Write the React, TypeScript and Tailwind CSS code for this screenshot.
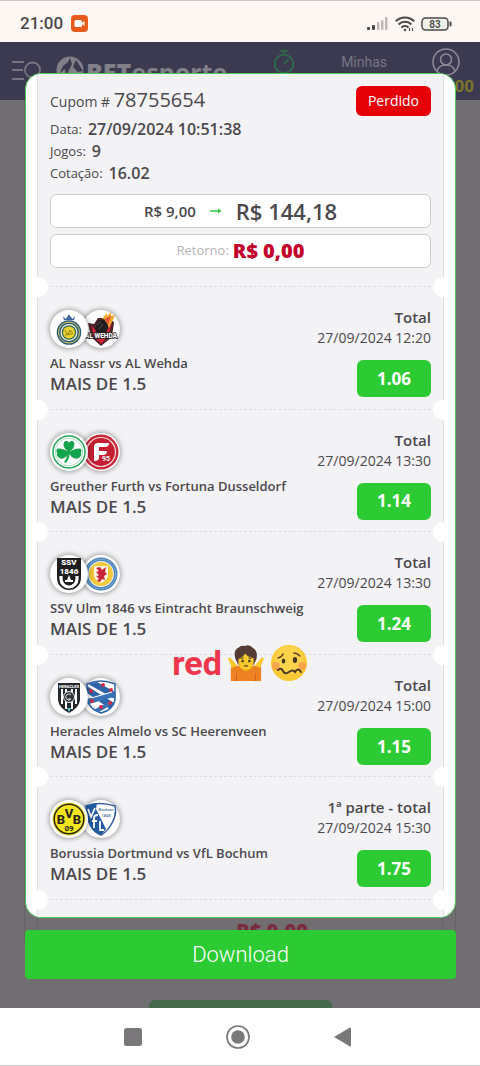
import React from 'react';

type Match = {
	teams: string;
	pick: string;
	market: string;
	date: string;
	odd: string;
	home: React.ReactNode;
	away: React.ReactNode;
};

const AlNassr = () => (
	<svg viewBox="0 0 36 36" className="size-full">
		<path d="M12 5l2.500 3L18 3.500l3.500 4.500L24 5l-1.500 7h-9z" fill="#3f659f" />
		<path d="M13 9.500h10" stroke="#fff" strokeWidth=".8" />
		<circle cx="18" cy="21.500" r="12.300" fill="#2f6079" />
		<circle cx="18" cy="21.500" r="10.500" fill="none" stroke="#d9c75a" strokeWidth="1" />
		<circle cx="18" cy="21.500" r="8.500" fill="#f4f4ea" />
		<circle cx="18" cy="21.500" r="7.300" fill="#386b50" />
		<circle cx="18" cy="21.500" r="6" fill="#e8d32f" />
		<path d="M14 19l3 5 2-5 3 4M14 24l7-1" stroke="#98811d" strokeWidth="1" fill="none" />
	</svg>
);

const AlWehda = () => (
	<svg viewBox="0 0 36 36" className="size-full">
		<path d="M5 12l6 1 4-6h9l7 4-2 15-11 9L8 26z" fill="#4a2329" />
		<path d="M8 14l3 11 7 8 7-7 4-14-4 6-6 8z" fill="#d32036" />
		<path d="M19 8l5-6v3l4-4v4l4-1-3 7-3 6-3-5z" fill="#f2a52d" />
		<path d="M22 8l6-3-3 9z" fill="#e7503b" />
		<path d="M12 18l3-8 6-2 4 6-2 9-8 2z" fill="#201d20" />
		<path d="M14 14l4-3M16 18l4-5" stroke="#5c5558" strokeWidth="1" />
		<text x="18" y="27" textAnchor="middle" fontSize="6.500" fontWeight="800" fill="#fff" stroke="#222" strokeWidth="1.500" paintOrder="stroke" fontFamily="Roboto, sans-serif">AL WEHDA</text>
	</svg>
);

const Furth = () => (
	<svg viewBox="0 0 36 36" className="size-full">
		<circle cx="18" cy="18" r="16" fill="#fff" stroke="#24a65a" strokeWidth="1.500" />
		<circle cx="18" cy="18" r="13.800" fill="#fff" stroke="#73c795" strokeWidth=".6" />
		<g fill="#14a34d">
			<path d="M18 18C10 13 12 6 16 7q2 .5 2 2 0-1.500 2-2c4-1 6 6-2 11z" />
			<path d="M18 18C7 12 4 15 6 19q-1 2 1 4c4 4 10 0 11-5z" />
			<path d="M18 18c11-6 14-3 12 1q1 2-1 4c-4 4-10 0-11-5z" />
			<path d="M17 17h2q0 7-4 12l-2-1q4-5 4-11z" />
		</g>
	</svg>
);

const Fortuna = () => (
	<svg viewBox="0 0 36 36" className="size-full">
		<circle cx="18" cy="18" r="17.500" fill="#c9283a" />
		<circle cx="18" cy="18" r="14.500" fill="#c51f32" stroke="#f3dadd" strokeWidth="1.200" />
		<path d="M11 27V13q0-4 4-4h11q0 4-4 4h-6v4h8q0 4-4 4h-4v3q0 3-5 3z" fill="#fff" />
		<text x="23" y="27" textAnchor="middle" fontSize="7" fontWeight="700" fill="#fff" fontFamily="Roboto, sans-serif">95</text>
	</svg>
);

const Ulm = () => (
	<svg viewBox="0 0 36 36" className="size-full">
		<path d="M6 2h24v20a12 12 0 0 1-24 0z" fill="#1f1f20" />
		<g fill="#fff" fontFamily="Roboto, sans-serif" fontWeight="900" textAnchor="middle">
			<text x="18" y="9" fontSize="8">SSV</text>
			<text x="18" y="18" fontSize="8">1846</text>
		</g>
		<path d="M10 20v3a8 8 0 0 0 16 0v-3" fill="none" stroke="#fff" strokeWidth="3.200" />
		<path d="M14 26v-2h2l2-5 2 5h2v2z" fill="#fff" />
	</svg>
);

const Braunschweig = () => (
	<svg viewBox="0 0 36 36" className="size-full">
		<circle cx="18" cy="18" r="17" fill="#f4f4f4" />
		<circle cx="18" cy="18" r="14.700" fill="none" stroke="#4d87bd" strokeWidth="3.500" />
		<circle cx="18" cy="18" r="14.700" fill="none" stroke="#9dbfdc" strokeWidth="1" strokeDasharray="1.500 1" />
		<circle cx="18" cy="18" r="12" fill="#f1c83a" />
		<path d="M11 10h14v9q-1 6-7 8-6-2-7-8z" fill="#fff2df" />
		<path d="M13 12l4-1 2 3 4-3-1 5 2 2-3 2 1 4-3-1-2 3-3-1 2-3-3-1 3-2-3-3 3-1z" fill="#c9263a" />
	</svg>
);

const Heracles = () => (
	<svg viewBox="0 0 36 36" className="size-full">
		<path d="M7 4h22v17q-1 8-11 13Q8 29 7 21z" fill="#26292c" />
		<path d="M11 10v15M15 10v20M21 10v20M25 10v15" stroke="#fff" strokeWidth="2" />
		<circle cx="18" cy="18" r="5.500" fill="#303438" stroke="#e9e9e9" />
		<path d="M20 16a3 3 0 1 0 0 4h-3" fill="none" stroke="#ddd" />
		<path d="M16 29h4l-2 4z" fill="#60cfc8" />
		<text x="18" y="9" textAnchor="middle" fontSize="4" fontWeight="800" fill="#fff" fontFamily="Roboto, sans-serif">HERACLES</text>
	</svg>
);

const Heerenveen = () => (
	<svg viewBox="0 0 36 36" className="size-full">
		<path d="M4 5q14-6 28 0v16q-2 10-14 13Q6 30 4 20z" fill="#fff" stroke="#2d63a8" strokeWidth="1.500" />
		<path d="M4 7l27 17-4 6L4 14zM14 3l18 10v7L5 5z" fill="#2d63a8" />
		<path d="M4 20l27-8v6L6 25zM10 31l18-9-3 6-9 5z" fill="#3972b4" />
		<g fill="#d12b49">
			<circle cx="20" cy="6" r="2" /><circle cx="8" cy="12" r="2" />
			<circle cx="28" cy="11" r="2" /><circle cx="9" cy="22" r="2" />
			<circle cx="27" cy="24" r="2" /><circle cx="18" cy="28" r="2" />
		</g>
		<path d="M8 19l21-6" stroke="#fff" strokeWidth="1" />
	</svg>
);

const Dortmund = () => (
	<svg viewBox="0 0 36 36" className="size-full">
		<circle cx="18" cy="18" r="16.500" fill="#ece12c" />
		<circle cx="18" cy="18" r="14.800" fill="#f5e51d" stroke="#292719" strokeWidth="1.500" />
		<g fill="#29261b" fontFamily="Roboto, sans-serif" fontWeight="800" textAnchor="middle">
			<text x="10" y="23" fontSize="13">B</text>
			<text x="18" y="17" fontSize="13">V</text>
			<text x="26" y="23" fontSize="13">B</text>
			<text x="18" y="30" fontSize="8">09</text>
		</g>
	</svg>
);

const Bochum = () => (
	<svg viewBox="0 0 36 36" className="size-full">
		<path d="M3 5q14-5 29 0 2 8-3 17-4 8-11 12Q4 29 3 5z" fill="#fff" stroke="#315f9f" strokeWidth="1.500" />
		<path d="M3 5q6-3 11-3l-1 6 10 20-5 6Q4 29 3 5z" fill="#245aa0" />
		<path d="M5 8l3 8 4-9M11 27V17q0-3 4-3M9 20h5M17 20v9h4" fill="none" stroke="#fff" strokeWidth="1.800" />
		<g fill="#5d7fae" fontSize="4" fontWeight="700" textAnchor="middle" fontFamily="Roboto, sans-serif">
			<text x="23" y="10">Bochum</text>
			<text x="23" y="16">1848</text>
		</g>
	</svg>
);

const matches: Match[] = [
	{ teams: 'AL Nassr vs AL Wehda', pick: 'MAIS DE 1.5', market: 'Total', date: '27/09/2024 12:20', odd: '1.06', home: <AlNassr />, away: <AlWehda /> },
	{ teams: 'Greuther Furth vs Fortuna Dusseldorf', pick: 'MAIS DE 1.5', market: 'Total', date: '27/09/2024 13:30', odd: '1.14', home: <Furth />, away: <Fortuna /> },
	{ teams: 'SSV Ulm 1846 vs Eintracht Braunschweig', pick: 'MAIS DE 1.5', market: 'Total', date: '27/09/2024 13:30', odd: '1.24', home: <Ulm />, away: <Braunschweig /> },
	{ teams: 'Heracles Almelo vs SC Heerenveen', pick: 'MAIS DE 1.5', market: 'Total', date: '27/09/2024 15:00', odd: '1.15', home: <Heracles />, away: <Heerenveen /> },
	{ teams: 'Borussia Dortmund vs VfL Bochum', pick: 'MAIS DE 1.5', market: '1ª parte - total', date: '27/09/2024 15:30', odd: '1.75', home: <Dortmund />, away: <Bochum /> },
];

const StatusBar = () => (
	<div className="flex h-[42px] items-center justify-between border-t border-[#cfc8c8] bg-[#fdf7f4] pt-1 pr-7 pl-5">
		<div className="flex items-center gap-2 font-['Roboto',sans-serif] text-[17px] font-medium text-[#4b4748]">
			<span>21:00</span>
			<svg viewBox="0 0 17 17" className="size-[17px]">
				<rect width="17" height="17" rx="4" fill="#e75c1d" />
				<rect x="3.500" y="5" width="7.500" height="7" rx="1.500" fill="#fff" />
				<path d="M11 8l2.500-2v5L11 9z" fill="#fff" />
			</svg>
		</div>
		<div className="flex items-center gap-1.5">
			<svg viewBox="0 0 22 14" className="h-3.5 w-[22px]">
				<g fill="#4b4849">
					<rect x="0" y="10" width="3" height="3" rx="1" />
					<rect x="5" y="8" width="3" height="5" rx="1" />
				</g>
				<g fill="#bdb8b7">
					<rect x="10" y="5" width="2.500" height="8" rx="1" />
					<rect x="14" y="3" width="2.500" height="10" rx="1" />
					<rect x="18" y="0" width="2.500" height="13" rx="1" />
				</g>
			</svg>
			<svg viewBox="0 0 20 16" className="h-4 w-5" fill="none" stroke="#4b4849" strokeWidth="2">
				<path d="M.8 5.200a13 13 0 0 1 18.400 0M3.600 8.500a9 9 0 0 1 12.800 0M6.400 11.500a5 5 0 0 1 7.200 0" />
				<circle cx="10" cy="14" r="1.200" fill="#4b4849" stroke="none" />
				<path d="M14.500 12v3M17.500 15v-3" strokeWidth="1.200" />
			</svg>
			<svg viewBox="0 0 31 14" className="h-3.5 w-[31px]">
				<rect x="1" y="1" width="26" height="12" rx="3.500" fill="#edf0e8" stroke="#4b4849" strokeWidth="1.500" />
				<rect x="28.500" y="4.500" width="2" height="5" rx="1" fill="#4b4849" />
				<text x="14" y="10.500" textAnchor="middle" fontSize="10" fontWeight="600" fill="#4b4849" fontFamily="Roboto, sans-serif">83</text>
			</svg>
		</div>
	</div>
);

const SiteHeader = () => (
	<header className="flex h-[58px] justify-between bg-[#3c3a50] pr-[6px] pl-3">
		<div className="flex pt-3.5">
			<svg viewBox="0 0 30 30" className="mt-1 mr-3.5 size-[30px]" fill="none" stroke="#77757f" strokeWidth="1.800">
				<path d="M0 2h12M0 10h11M0 19h12M26 16l4 5" />
				<circle cx="20.500" cy="10" r="7.500" />
			</svg>
			<svg viewBox="0 0 28 28" className="size-7">
				<circle cx="14" cy="14" r="13.500" fill="#817f88" />
				<path d="M14 2l-2 4-5 4-3 7 5-4 1 9 3-8 3-6zM20 4l-3 7 5 5 5-1z" fill="#3c3a50" />
			</svg>
			<div className="ml-0.5 font-['Noto_Sans',sans-serif] text-[25px] leading-8 font-black text-[#817f88]">
				BET<span className="font-bold">esporte</span>
			</div>
		</div>
		<svg viewBox="0 0 24 26" className="mt-2 size-6" fill="none" stroke="#2f6a4a" strokeWidth="2">
			<circle cx="12" cy="15" r="10" />
			<path d="M12 15l5-5M8 1h8M12 1v4" />
		</svg>
		<a href="#minhas" className="pt-2.5 font-['Roboto',sans-serif] text-[14px] leading-5 text-[#777584]">Minhas</a>
		<div className="flex flex-col items-end pt-1.5">
			<svg viewBox="0 0 28 28" className="mr-3.5 size-7" fill="none" stroke="#8d8b97" strokeWidth="1.500">
				<circle cx="14" cy="14" r="13" />
				<circle cx="14" cy="11.500" r="5.500" />
				<path d="M5 23q2-6 9-6t9 6" />
			</svg>
			<span className="font-['Roboto',sans-serif] text-[17px] leading-5 font-bold text-[#7c7528]">00</span>
		</div>
	</header>
);

const MatchRow = ({ match }: { match: Match }) => (
	<li className="relative flex items-start justify-between px-3 pt-[19px]">
		<div>
			<div className="mt-1 flex">
				<span className="z-10 size-[38px] rounded-full bg-white p-px shadow-[0_0_5px_1px_rgba(0,0,0,0.35)]">{match.home}</span>
				<span className="-ml-1.5 size-[38px] rounded-full bg-white p-px shadow-[0_0_5px_1px_rgba(0,0,0,0.35)]">{match.away}</span>
			</div>
			<p className="mt-[5px] text-[13px] leading-5 font-semibold">{match.teams}</p>
			<p className="text-[17px] leading-[22px] font-semibold">{match.pick}</p>
		</div>
		<div className="flex flex-col items-end">
			<p className="text-[15px] leading-[22px] font-semibold">{match.market}</p>
			<p className="text-[14px] leading-5">{match.date}</p>
			<button className="mt-3 h-[37px] w-[74px] rounded-md bg-[#2dcb33] text-[17px] font-bold text-white">{match.odd}</button>
		</div>
		<Divider />
	</li>
);

const Divider = () => (
	<>
		<span className="absolute inset-x-3 bottom-0 border-b border-dashed border-[#dddbdf]" />
		<span className="absolute -bottom-2.5 -left-2.5 size-5 rounded-full bg-white" />
		<span className="absolute -right-2.5 -bottom-2.5 size-5 rounded-full bg-white" />
	</>
);

const Coupon = () => (
	<section className="rounded-2xl border border-[#4fc75c] bg-white px-[11px]">
		<div className="relative border-x border-[#e0dfe3] bg-[#f3f2f5] pb-[17px] text-[#4b494d]">
			<div className="relative px-3 pt-3 pb-[19px]">
				<div className="flex items-start justify-between">
					<h1 className="text-[14px] leading-7">Cupom # <span className="text-[20px]">78755654</span></h1>
					<span className="rounded-md bg-[#e60008] px-3 text-[14px] leading-[30px] text-white">Perdido</span>
				</div>
				<dl className="mt-0.5 text-[13px] leading-[22px]">
					<div className="flex gap-1.5"><dt>Data:</dt><dd className="text-[16px] font-semibold">27/09/2024 10:51:38</dd></div>
					<div className="flex gap-1.5"><dt>Jogos:</dt><dd className="text-[16px] font-semibold">9</dd></div>
					<div className="flex gap-1.5"><dt>Cotação:</dt><dd className="text-[16px] font-semibold">16.02</dd></div>
				</dl>
				<div className="mt-2.5 flex h-[34px] items-center justify-center rounded-md border border-[#cdccd0] bg-white">
					<span className="text-[15px] font-semibold">R$ 9,00</span>
					<svg viewBox="0 0 12 8" className="mx-3.5 h-2 w-3" fill="none" stroke="#35c447" strokeWidth="1.500">
						<path d="M0 4h9" />
						<path d="M8 1.500L11.500 4 8 6.500z" fill="#35c447" stroke="none" />
					</svg>
					<span className="text-[22px] font-semibold">R$ 144,18</span>
				</div>
				<div className="mt-1.5 flex h-[34px] items-center justify-center gap-1 rounded-md border border-[#cdccd0] bg-white">
					<span className="text-[13px] text-[#b5b4b7]">Retorno:</span>
					<span className="text-[20px] font-extrabold text-[#c3002b]">R$ 0,00</span>
				</div>
				<Divider />
			</div>
			<ul className="grid min-h-[613px] auto-rows-fr">
				{matches.map((match) => (
					<MatchRow key={match.teams} match={match} />
				))}
			</ul>
		</div>
	</section>
);

const Reaction = () => (
	<div className="absolute inset-x-0 top-[601px] flex items-center justify-center gap-1.5">
		<span className="font-['Roboto',sans-serif] text-[34px] leading-10 font-bold text-[#ee364d]">red</span>
		<svg viewBox="0 0 38 38" className="h-[38px] w-9">
			<path d="M3 38V25q0-3 4-3h24q4 0 4 3v13z" fill="#ee8223" />
			<path d="M9 38v-8M29 38v-8" stroke="#c9611b" strokeWidth="1" />
			<path d="M4 24L0 14l2-1 8 9zM34 24l4-10-2-1-8 9z" fill="#fbc52c" />
			<path d="M13 22h12q-1 6-6 6t-6-6z" fill="#e4a41f" />
			<path d="M8 15Q5 6 11 3q2-3 7-2 5-2 8 2 6 3 4 12l-3 6H11z" fill="#543c35" />
			<path d="M11 15q5-2 7-6 3 4 9 5 1 12-8 12t-8-11z" fill="#fbc92e" />
			<circle cx="15.500" cy="17" r="1.400" fill="#473a32" />
			<circle cx="22.500" cy="17" r="1.400" fill="#473a32" />
			<path d="M13.500 14.500l3-1M21.500 13.500l3 1M17 22.500q2-1.500 4 0" fill="none" stroke="#5d4427" strokeWidth="1.200" />
		</svg>
		<svg viewBox="0 0 38 38" className="size-[38px]">
			<circle cx="19" cy="19" r="18" fill="#fbc936" />
			<circle cx="19" cy="16" r="14" fill="#fdd755" opacity=".7" />
			<circle cx="6" cy="22" r="4" fill="#f28b52" opacity=".6" />
			<circle cx="32" cy="22" r="4" fill="#f28b52" opacity=".6" />
			<ellipse cx="13.500" cy="17" rx="1.800" ry="2.500" fill="#463629" />
			<ellipse cx="25" cy="16" rx="2.200" ry="3" fill="#463629" />
			<path d="M8 14q4-1 5-4M30 12q-3-3-6-3" fill="none" stroke="#604322" strokeWidth="1.500" strokeLinecap="round" />
			<path d="M8 26q3-3 5 1t6 1 6 0q3-5 6 0" fill="none" stroke="#4c3928" strokeWidth="2" strokeLinecap="round" />
		</svg>
	</div>
);

const NavBar = () => (
	<nav className="flex h-[58px] items-center justify-center gap-[84px] border-b border-[#cfcfcf] bg-white pr-1">
		<button aria-label="Recentes">
			<svg viewBox="0 0 18 18" className="size-[18px]"><rect width="18" height="18" rx="2.500" fill="#7b787c" /></svg>
		</button>
		<button aria-label="Início">
			<svg viewBox="0 0 24 24" className="size-6">
				<circle cx="12" cy="12" r="11" fill="none" stroke="#7b787c" strokeWidth="1.700" />
				<circle cx="12" cy="12" r="6.800" fill="#7b787c" />
			</svg>
		</button>
		<button aria-label="Voltar">
			<svg viewBox="0 0 18 20" className="h-5 w-[18px]"><path d="M0 10L16 .5q1 0 1 1v17q0 1-1 1z" fill="#7b787c" /></svg>
		</button>
	</nav>
);

const App: React.FC = () => {
	return (
		<div className="flex min-h-screen flex-col bg-white font-['Open_Sans',sans-serif]">
			<StatusBar />
			<main className="grid flex-1">
				<div className="col-start-1 row-start-1 flex flex-col overflow-hidden bg-[#706e70]">
					<SiteHeader />
					<div className="mx-6 flex flex-1 flex-col justify-end border-x border-[#656365] px-3">
						<div className="flex flex-1 items-end justify-center gap-3 border-x border-[#656365]">
							<span className="text-[13px] leading-[18px] text-[#3f3c40]">Retorno:</span>
							<span className="text-[20px] leading-6 font-extrabold text-[#7c2a3e]">R$ 0,00</span>
						</div>
					</div>
					<div className="mx-auto mt-[57px] h-2 w-[183px] rounded-t-md bg-[#44694b]" />
				</div>
				<div className="relative z-10 col-start-1 row-start-1 pt-[31px] pr-6 pb-[29px] pl-[25px]">
					<Coupon />
					<button className="mt-3 h-[49px] w-full rounded bg-[#2dcb33] font-['Roboto',sans-serif] text-[22px] font-light text-white">Download</button>
					<Reaction />
				</div>
			</main>
			<NavBar />
		</div>
	);
};

export default App;
